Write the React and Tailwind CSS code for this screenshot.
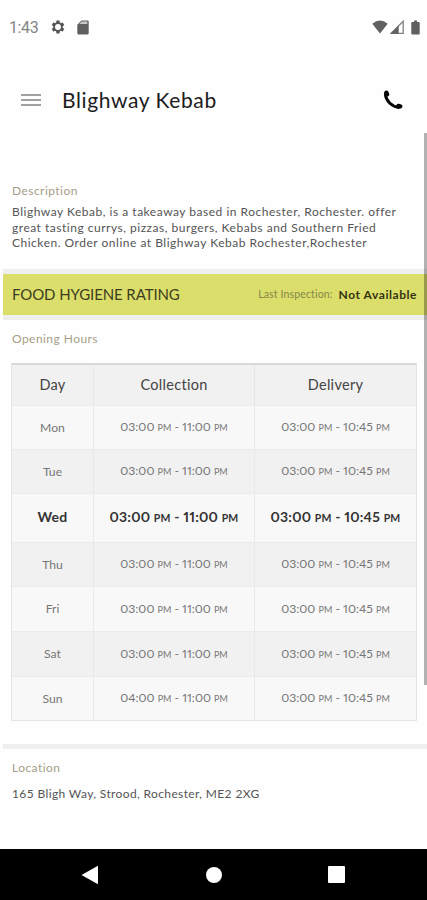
import React from 'react';
import { MdSettings } from 'react-icons/md';

const STYLES = {
  label: "text-[12px] leading-[16px] tracking-[0.45px] text-[#a69e88]",
  divider: "ml-[3px] bg-[#efefef]",
  cell: "flex items-center justify-center whitespace-nowrap",
};

const HOURS = [
  { day: "Mon", collection: ["03:00", "11:00"], delivery: ["03:00", "10:45"], row: "h-[44px] bg-[#f8f8f8]" },
  { day: "Tue", collection: ["03:00", "11:00"], delivery: ["03:00", "10:45"], row: "h-[44px] bg-[#f1f1f1]" },
  { day: "Wed", collection: ["03:00", "11:00"], delivery: ["03:00", "10:45"], row: "h-[49px] bg-[#f8f8f8]", today: true },
  { day: "Thu", collection: ["03:00", "11:00"], delivery: ["03:00", "10:45"], row: "h-[44px] bg-[#f1f1f1]" },
  { day: "Fri", collection: ["03:00", "11:00"], delivery: ["03:00", "10:45"], row: "h-[45px] bg-[#f8f8f8]" },
  { day: "Sat", collection: ["03:00", "11:00"], delivery: ["03:00", "10:45"], row: "h-[45px] bg-[#f1f1f1]" },
  { day: "Sun", collection: ["04:00", "11:00"], delivery: ["03:00", "10:45"], row: "h-[44px] bg-[#f8f8f8]" },
];

function StatusBar() {
  return (
    <div className="flex h-14 items-center pl-[9px] pr-[7px] text-[#606060]">
      <span className="w-[41px] font-[Roboto] text-[16px] leading-5 tracking-[-0.4px] text-[#858585]">1:43</span>
      <svg className="-mt-0.5 h-4 w-4" viewBox="0 0 24 24">
        <MdSettings size={24} color="#555" />
        <circle cx="12" cy="12" r="4.4" fill="#fefefe" />
      </svg>
      <svg className="ml-[11px] -mt-0.5" width="12" height="15" viewBox="0 0 12 15" fill="currentColor">
        <path d="M4.5 0.5H10.5Q11.7 0.5 11.7 1.7V13Q11.7 14.5 10.2 14.5H1.8Q0.3 14.5 0.3 13V4.7Z" />
        <path d="M4.8 1.5H10.3V4H2.4Z" fill="#c9c9c9" />
      </svg>
      <svg className="ml-auto -mt-0.5" width="16" height="14" viewBox="0 0 16 14" fill="currentColor">
        <path d="M0.3 3.7Q8 -2.5 15.7 3.7L8 13.6Z" />
      </svg>
      <svg className="ml-[2px] -mt-0.5" width="14" height="14" viewBox="0 0 14 14">
        <path d="M1.2 13.3L13.2 1.3V13.3Z" fill="#fff" stroke="#808080" strokeWidth="1.3" />
        <path d="M0.5 13.8L8.7 5.6V13.8Z" fill="#606060" />
      </svg>
      <svg className="ml-[7px] -mt-0.5" width="9" height="15" viewBox="0 0 9 15" fill="currentColor">
        <path d="M3 0.5H6V2H7.8Q8.7 2 8.7 3V13.5Q8.7 14.5 7.8 14.5H1.2Q0.3 14.5 0.3 13.5V3Q0.3 2 1.2 2H3Z" />
      </svg>
    </div>
  );
}

function Header() {
  return (
    <header className="flex h-[88px] items-center pl-[21px] pr-[24px]">
      <div className="flex w-[20px] flex-col gap-[3px]">
        <div className="h-[2px] bg-[#a0a0a0]"></div>
        <div className="h-[2px] bg-[#a0a0a0]"></div>
        <div className="h-[2px] bg-[#a0a0a0]"></div>
      </div>
      <h1 className="ml-[21px] text-[21px] leading-6 tracking-[0.6px] text-[#1c1c1c]">Blighway Kebab</h1>
      {/* handset: thin curved grip with rounded ends */}
      <svg className="ml-auto" width="20" height="20" viewBox="0 0 20 20" fill="none" stroke="#050505" strokeLinecap="round">
        <path d="M2.4 4.2C2.8 10.8 8.8 16.6 15.6 17.4" strokeWidth="3" />
        <path d="M3.4 2.7L4.1 4.3" strokeWidth="4.4" />
        <path d="M15.4 15.9L17.3 16.3" strokeWidth="4.4" />
      </svg>
    </header>
  );
}

function TimeRange({ range, today }) {
  const pm = today ? "text-[10.5px]" : "text-[9px]";
  return (
    <span className="proportional-nums">
      {range[0]} <span className={pm}>PM</span> - {range[1]} <span className={pm}>PM</span>
    </span>
  );
}

function OpeningHours() {
  return (
    <div className="ml-[11px] w-[406px] border border-t-2 border-[#e5e5e5] border-t-[#d7d7d7]">
      <div className="grid h-[40px] grid-cols-[82px_161px_161px] divide-x divide-[#e7e7e7] bg-[#f1f1f1] text-[14.5px] tracking-[0.3px] text-[#444]">
        <div className={STYLES.cell}>Day</div>
        <div className={STYLES.cell}>Collection</div>
        <div className={STYLES.cell}>Delivery</div>
      </div>
      {HOURS.map(({ day, collection, delivery, row, today }) => (
        <div
          key={day}
          className={`grid grid-cols-[82px_161px_161px] divide-x divide-[#e9e9e9] border-t border-[#ebebeb] ${row} ${
            today ? "text-[14px] leading-[18px] font-bold tracking-[0.2px] text-[#333] *:pb-0.5" : "text-[12.2px] leading-[18px] text-[#777]"
          }`}
        >
          <div className={STYLES.cell}>{day}</div>
          <div className={STYLES.cell}><TimeRange range={collection} today={today} /></div>
          <div className={STYLES.cell}><TimeRange range={delivery} today={today} /></div>
        </div>
      ))}
    </div>
  );
}

function NavBar() {
  return (
    <nav className="mt-auto flex h-[51px] items-center bg-black pl-[81px]">
      <svg width="18" height="20" viewBox="0 0 18 20" fill="#fff">
        <path d="M17 0.8V19.2L0.5 10Z" />
      </svg>
      <div className="ml-[107px] size-4 rounded-full bg-white"></div>
      <div className="ml-[106px] size-[17px] rounded-[1px] bg-white"></div>
    </nav>
  );
}

export default function App() {
  return (
    <div className="relative flex h-[900px] w-[427px] flex-col overflow-hidden bg-[#fefefe] font-[Lato,sans-serif]">
      <StatusBar />
      <Header />

      <section className="h-[125px] pl-3 pt-[39px]">
        <h2 className={STYLES.label}>Description</h2>
        <p className="mt-[5px] whitespace-nowrap text-[12px] leading-[15.7px] tracking-[0.51px] text-[#555]">
          Blighway Kebab, is a takeaway based in Rochester, Rochester. offer<br />
          great tasting currys, pizzas, burgers, Kebabs and Southern Fried<br />
          Chicken. Order online at Blighway Kebab Rochester,Rochester
        </p>
      </section>

      <section className="ml-[3px] flex h-[51px] items-center border-y-[5px] border-[#efefef] bg-[#dbde6b] pl-[9px] pr-[10px]">
        <span className="text-[15px] tracking-[-0.1px] text-[#3d3d20]">FOOD HYGIENE RATING</span>
        <span className="ml-auto text-[10.5px] tracking-[0.15px] text-[#85874a]">Last Inspection:</span>
        <span className="ml-[6px] text-[12px] font-bold tracking-[0.55px] text-[#343410]">Not Available</span>
      </section>

      <h2 className={`${STYLES.label} ml-3 mt-[11px] mb-[16px]`}>Opening Hours</h2>
      <OpeningHours />

      <div className={`${STYLES.divider} mt-[23px] h-[5px]`}></div>
      <section className="pl-3 pt-[11px]">
        <h2 className={STYLES.label}>Location</h2>
        <p className="mt-[10px] text-[12px] leading-4 tracking-[0.37px] text-[#555]">165 Bligh Way, Strood, Rochester, ME2 2XG</p>
      </section>

      <NavBar />

      {/* scrollbar thumb over the page edge */}
      <div className="absolute right-0 top-[133px] h-[552px] w-[3px] bg-black/30"></div>
    </div>
  );
}
